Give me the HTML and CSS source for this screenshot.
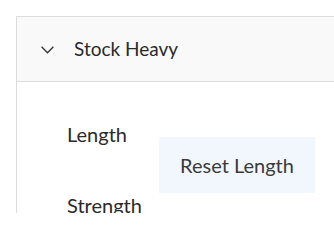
FILE: index.html
```html
<!DOCTYPE html>
<html>
<head>
<meta charset="utf-8">
<link rel="stylesheet" href="styles.css">
</head>
<body>
<div class="card">
  <div class="card-header">
    <svg class="chevron" width="13" height="8" viewBox="0 0 13 8"><path d="M0.6 0.7 L6.5 6.8 L12.4 0.7" fill="none" stroke="#333" stroke-width="1.3"/></svg>
    <span class="title">Stock Heavy</span>
  </div>
  <div class="card-body">
    <div class="row">
      <div class="label">Length</div>
      <button class="reset">Reset Length</button>
    </div>
    <div class="row">
      <div class="label">Strength</div>
    </div>
  </div>
</div>
</body>
</html>
```
FILE: styles.css
```css
html, body {
  margin: 0;
  padding: 0;
  background: #fff;
}
body {
  padding: 16px 0 0 16px;
  font-family: "Lato", "Open Sans", sans-serif;
  height: 213px;
  box-sizing: border-box;
  overflow: hidden;
}
.card {
  height: 197px;
  box-sizing: border-box;
  border-top: 1px solid #dcdcdc;
  border-left: 1px solid #dcdcdc;
  overflow: hidden;
}
.card-header {
  height: 65px;
  background: #f9f9f9;
  border-bottom: 1px solid #dcdcdc;
  display: flex;
  align-items: center;
  padding-left: 24px;
  box-sizing: border-box;
}
.chevron {
  display: block;
  margin: 2px 20px 0 0;
}
.title {
  font-size: 19px;
  line-height: 24px;
  color: #2a2a2a;
}
.card-body {
  padding: 40px 0 0 50px;
}
.row {
  display: flex;
  align-items: flex-start;
}
.label {
  width: 92px;
  font-size: 20px;
  line-height: 24px;
  color: #2a2a2a;
}
.reset {
  margin-top: 15px;
  width: 156px;
  height: 56px;
  background: #f1f7fd;
  border: none;
  font-family: inherit;
  font-size: 20px;
  line-height: 24px;
  color: #3a3a3a;
  padding: 0;
}
```
